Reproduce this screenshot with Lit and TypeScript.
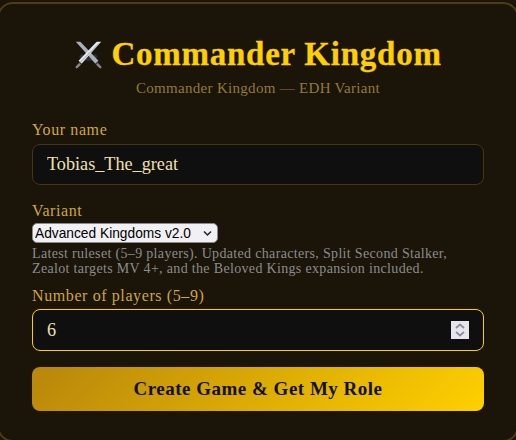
import { LitElement, html, css } from "lit";
import { customElement } from "lit/decorators.js";

const SERIF = css`"Liberation Serif", "DejaVu Serif", serif`;

@customElement("app-root")
export class AppRoot extends LitElement {
  static styles = css`
    :host {
      display: block;
      width: 516px;
      height: 440px;
      box-sizing: border-box;
      padding-top: 2px;
      background: #1a1409;
      overflow: hidden;
      font-family: ${SERIF};
    }
    .card {
      box-sizing: border-box;
      height: 440px;
      margin: 0 -3px;
      background: #1a1409;
      border: 2px solid #4f3b14;
      border-radius: 16px;
      padding: 28px 33px 0;
      display: flex;
      flex-direction: column;
    }
    h1 {
      margin: 0;
      display: flex;
      justify-content: center;
      align-items: center;
      gap: 8px;
      height: 44px;
      color: #ffd000;
      font-size: 33px;
      letter-spacing: 0.75px;
      -webkit-text-stroke: 0.3px #ffd000;
      font-weight: 700;
      line-height: 44px;
      white-space: nowrap;
    }
    h1 svg { width: 29px; height: 29px; flex: none; }
    .sub {
      margin: 3px 0 0;
      text-align: center;
      color: #94793a;
      font-size: 15px;
      letter-spacing: 0.3px;
      line-height: 18px;
    }
    label {
      display: block;
      color: #cfa642;
      font-size: 16px;
      letter-spacing: 0.6px;
      line-height: 18px;
    }
    .name-label { margin-top: 24px; }
    .field {
      box-sizing: border-box;
      display: block;
      width: 100%;
      height: 41px;
      margin-top: 5px;
      padding: 0 14px;
      background: #0f0f0f;
      border: 1px solid #4a3510;
      border-radius: 8px;
      color: #f0e0b0;
      font-family: inherit;
      font-size: 18.2px;
      outline: none;
    }
    .variant-label { margin-top: 17px; }
    .select-wrap {
      position: relative;
      width: 186px;
      height: 20px;
      margin-top: 3px;
    }
    select {
      appearance: none;
      -webkit-appearance: none;
      box-sizing: border-box;
      width: 100%;
      height: 100%;
      padding: 0 0 0 2px;
      margin: 0;
      background: #f0f0f5;
      border: 1px solid #8a8a8e;
      border-radius: 5px;
      color: #000;
      font-family: "Liberation Sans", Arial, sans-serif;
      font-size: 13.75px;
    }
    .chev {
      position: absolute;
      right: 6px;
      top: 6px;
      width: 9px;
      height: 8px;
      pointer-events: none;
    }
    .hint {
      margin: 3px 0 0;
      color: #8c8c8c;
      font-size: 14px;
      letter-spacing: 0.33px;
      line-height: 15px;
      white-space: nowrap;
    }
    .players-label { margin-top: 11px; }
    .num-wrap { position: relative; margin-top: 4px; }
    .num-wrap .field { border-color: #ffd000; margin-top: 0; height: 42px; }
    .spin {
      position: absolute;
      right: 15px;
      top: 12px;
      width: 18px;
      height: 18px;
      background: #e6e6ec;
    }
    button {
      box-sizing: border-box;
      width: 100%;
      height: 44px;
      margin-top: 16px;
      border: none;
      border-radius: 8px;
      background: linear-gradient(135deg, #b8860b, #ffd000);
      color: #111;
      font-family: inherit;
      font-size: 19px;
      letter-spacing: 0.5px;
      font-weight: 700;
    }
  `;

  render() {
    return html`
      <div class="card">
        <h1>
          <svg viewBox="0 0 32 32">
            <path d="M7 17 Q16 25 25 17" fill="none" stroke="#2f2f32" stroke-width="4"/>
            <path d="M4 29 L12 20 M28 29 L20 20" stroke="#3a3a3e" stroke-width="3.4"/>
            <path d="M3 30 L6 27 M29 30 L26 27" stroke="#85858a" stroke-width="2.6" stroke-linecap="round"/>
            <path d="M2 2 L7 2 L27 23 L23.5 26 Z" fill="#aab0ba"/>
            <path d="M30 2 L25 2 L5 23 L8.5 26 Z" fill="#e4e8ee"/>
            <path d="M28 3.5 L7 24.5" stroke="#8e96a3" stroke-width="1"/>
          </svg>
          <span>Commander Kingdom</span>
        </h1>
        <p class="sub">Commander Kingdom — EDH Variant</p>
        <label class="name-label" for="n">Your name</label>
        <input id="n" class="field" type="text" .value=${"Tobias_The_great"} />
        <label class="variant-label" for="v">Variant</label>
        <div class="select-wrap">
          <select id="v"><option>Advanced Kingdoms v2.0</option></select>
          <svg class="chev" viewBox="0 0 9 8"><path d="M1 2.5 L4.5 6 L8 2.5" fill="none" stroke="#222" stroke-width="1.5"/></svg>
        </div>
        <p class="hint">Latest ruleset (5–9 players). Updated characters, Split Second Stalker,<br />Zealot targets MV 4+, and the Beloved Kings expansion included.</p>
        <label class="players-label" for="p">Number of players (5–9)</label>
        <div class="num-wrap">
          <input id="p" class="field" type="text" .value=${"6"} />
          <svg class="spin" viewBox="0 0 18 18"><path d="M5 7 L9 3.5 L13 7 M5 11 L9 14.5 L13 11" fill="none" stroke="#8f8d9c" stroke-width="1.8"/></svg>
        </div>
        <button>Create Game &amp; Get My Role</button>
      </div>
    `;
  }
}
